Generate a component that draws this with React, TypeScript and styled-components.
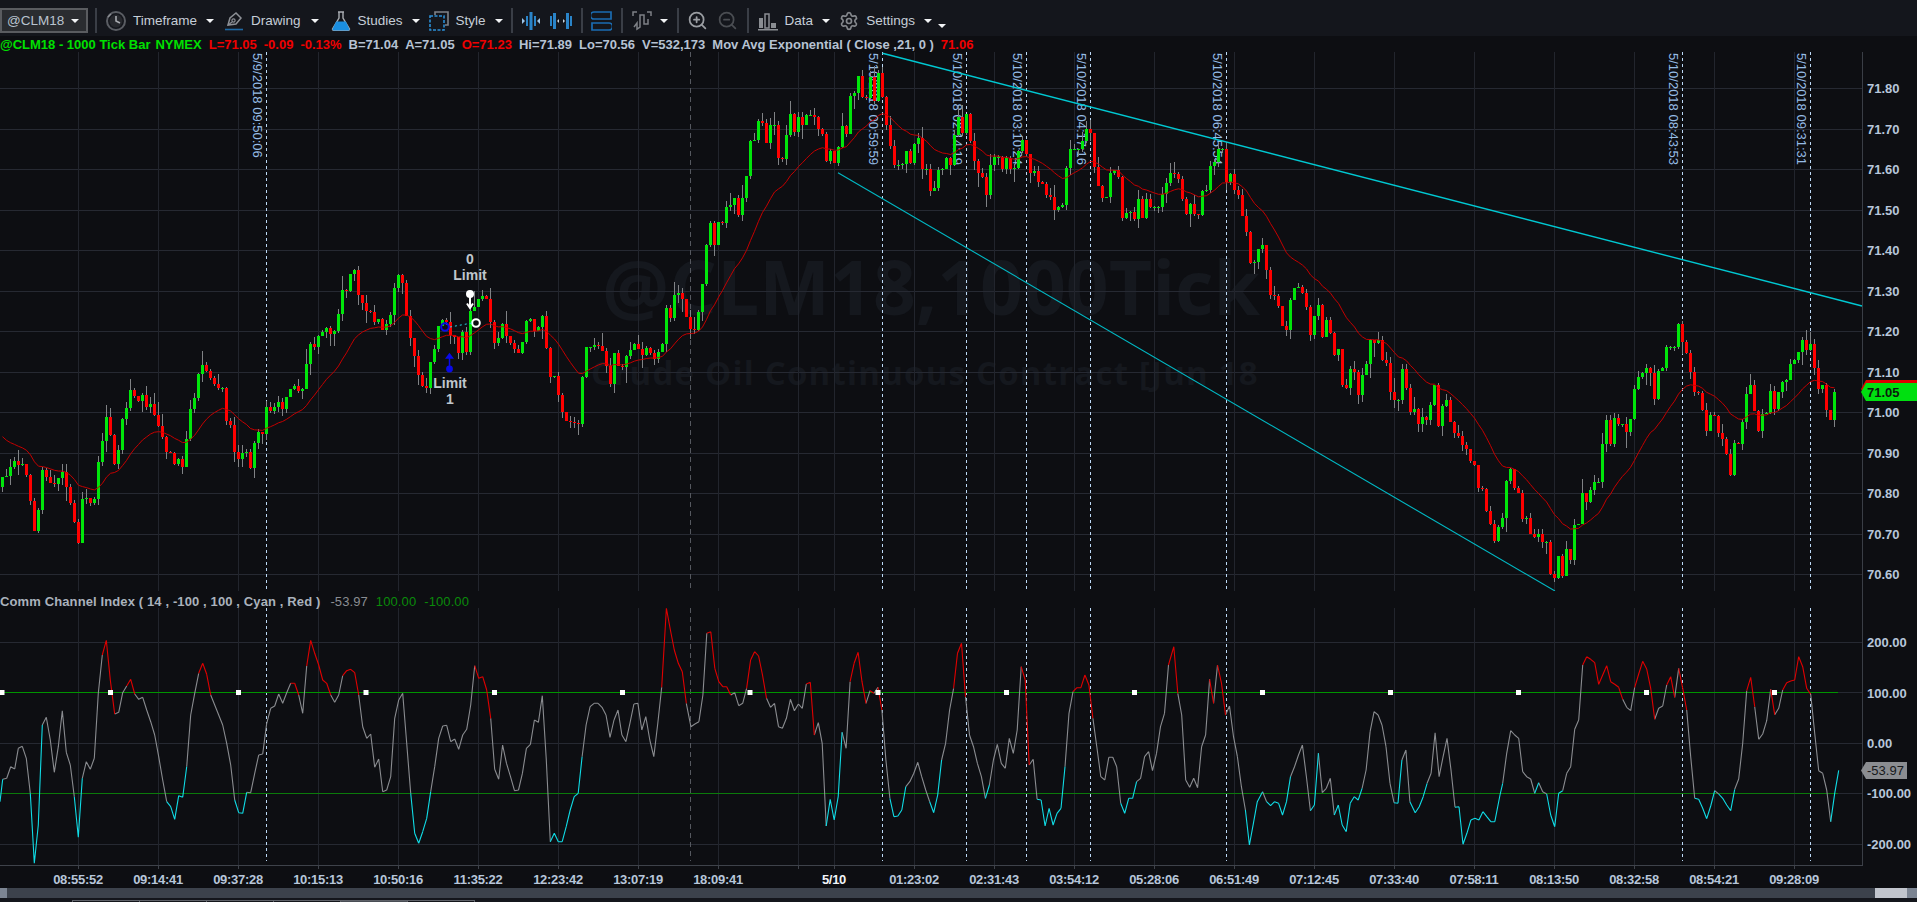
import React from 'react';
import styled, { createGlobalStyle } from 'styled-components';
import { Settings, ZoomIn, ZoomOut } from 'lucide-react';

const GlobalStyle = createGlobalStyle`
  html, body {
    margin: 0;
    padding: 0;
    background: #14161c;
    overflow: hidden;
  }
  body {
    font-family: "Liberation Sans", Arial, sans-serif;
  }
`;

/* ---------- data ---------- */

type Pt = [number, number];

// traces are read off the chart in crop units, then mapped back to page pixels
const parseTrace = (s: string, ox: number, oy: number, kx: number, ky = 3): Pt[] =>
  s.trim().split(/\s+/).map((p) => {
    const [x, y] = p.split(',').map(Number);
    return [ox + x / kx, oy + y / ky] as Pt;
  });

const closeTrace: Pt[] = [
  ...parseTrace(`0,705 12,715 24,680 34,660 45,680 55,665 68,780 78,880 88,795 96,680 108,725 120,735 130,715 140,695 150,745 165,830 175,920 185,775 195,775 205,795 215,770 222,640 232,590 240,518 248,590 258,688 266,625 275,530 285,500 295,432 305,490 312,480 322,458 330,515 338,490 350,540 362,580 372,637 382,640 392,675 402,652 412,695 418,592 428,495 438,468 445,397 455,370 465,400 480,430 490,445 500,445 508,550 518,555 528,665 535,655 550,625 562,688 572,590 582,570 592,590 598,482 608,520 622,480 636,515 642,470 652,445 662,435 675,470 688,360 696,310 705,323 714,285 722,275 733,263 745,295 758,225 768,142 778,155 785,103 795,90 803,165 813,190 822,215 832,215 840,250 848,237 858,275 866,250 875,225 884,140 892,102 902,130 910,225 920,298 930,358 938,410 948,445 958,445 965,358 975,322 983,250 993,238 1000,245 1010,290 1018,290 1028,345 1036,275 1045,335 1053,215 1062,202 1072,178 1082,168 1090,178 1098,240 1108,310 1118,290 1125,250 1138,300 1152,325 1165,345 1172,295 1180,238 1190,238 1200,285 1215,226 1224,322 1234,420 1242,408 1252,470 1260,517 1270,545 1285,545 1295,565 1305,408 1313,322 1325,322 1335,310 1350,335 1358,375 1368,435 1378,322 1390,410 1398,360 1410,335 1420,310 1440,345 1450,320 1465,358 1475,335 1485,310 1493,202 1503,238 1510,165 1525,155`, 0, 240, 2.24),
  ...parseTrace(`15,795 27,840 37,840 47,785 57,700 68,575 78,515 88,590 97,515 107,520 118,470 128,465 138,445 148,495 158,445 168,380 178,273 188,273 198,213 208,213 218,285 228,225 240,225 250,335 258,335 270,250 280,190 290,250 300,200 310,225 322,190 340,200 350,238 360,250 370,335 380,300 392,345 400,298 410,225 420,265 430,138 440,138 450,67 460,140 470,155 482,80 492,155 500,55 512,140 522,225 532,285 542,345 552,345 562,345 572,298 582,345 592,285 603,262 613,358 625,358 633,422 642,422 654,358 664,358 673,322 684,345 693,262 704,200 713,262 723,178 733,262 745,335 755,370 765,382 775,435 785,345 795,320 803,310 815,358 825,322 835,358 845,358 855,310 864,262 876,310 885,370 895,358 905,395 915,395 925,435 935,435 947,480 957,470 967,470 977,358 987,298 997,298 1007,298 1017,275 1027,238 1037,238 1047,345 1058,405 1068,445 1078,445 1088,370 1098,358 1110,382 1118,505 1128,490 1138,480 1148,515 1160,445 1170,505 1180,445 1190,470 1200,470 1210,470 1220,432 1240,370 1250,370 1260,382 1270,445 1282,495 1292,458 1302,495 1312,495 1322,420 1332,420 1342,345 1352,335 1362,298 1372,298 1382,395 1392,370 1402,420 1412,432 1422,495 1432,540 1442,638 1452,638 1462,600 1472,577 1482,650 1492,735 1502,735 1514,770 1526,840 1536,840 1545,738 1555,712 1566,712`, 680, 50, 2.529),
  ...parseTrace(`205,225 212,262 222,348 232,285 240,238 250,358 260,298 270,335 280,405 290,382 300,495 310,505 320,445 330,458 340,530 350,458 360,430 368,358 380,372 388,358 398,420 408,430 418,518 428,542 438,540 447,445 457,505 467,578 477,565 487,615 497,590 507,602 516,552 526,492 536,628 546,552 556,540 564,602 574,638 584,648 594,675 604,688 614,725 624,737 634,808 644,808 654,880 664,917 673,965 683,917 693,893 702,783 712,747 722,808 732,820 742,905 752,893 760,940 772,953 780,940 790,965 800,965 810,1065 820,1075 830,1002 840,1075 850,978 858,1028 868,915 878,915 888,820 898,845 908,808 918,785 928,785 938,660 947,600 957,675 967,590 977,615 987,612 997,638 1007,590 1017,492 1027,468 1037,458 1045,445 1055,458 1065,542 1075,445 1085,445 1095,372 1105,382 1115,382 1125,298 1135,382 1145,405 1155,470 1165,530 1175,517 1183,578 1193,638 1203,578 1213,590 1223,650 1233,660 1243,712 1252,772 1262,650 1272,675 1282,590 1292,505 1302,492 1310,578 1320,638 1330,578 1340,578 1350,505 1360,578 1370,505 1380,480 1390,480 1398,430 1408,418 1418,393 1428,358 1438,395 1448,370 1458,458 1468,517 1477,492 1487,578 1497,602 1505,517`, 1220, 220, 2.45),
];

const cciTrace: Pt[] = [
  ...parseTrace(`0,665 8,598 20,595 32,560 44,567 55,505 67,499 79,535 91,640 103,850 115,735 127,435 139,412 151,480 163,577 175,500 187,392 199,517 211,555 223,650 235,772 247,595 259,545 271,568 283,535 295,340 307,225 319,181 331,300 344,402 356,397 368,338 380,318 392,298 404,342 416,358 428,352 440,390 452,425 464,465 476,530 488,600 500,665 512,680 524,718 536,647 548,652 560,560 572,405 584,340 596,280 608,250 620,283 632,345 644,375 656,405 668,435 680,490 692,555 704,660 716,698 728,700 740,637 752,638 764,580 776,525 788,522 800,430 812,385 824,378 836,342 848,370 860,338 872,310 884,310 896,345 908,400 920,258 932,181 944,220 956,255 968,300 980,310 992,345 1004,367 1016,345 1028,287 1040,272 1052,268 1064,278 1076,345 1088,440 1100,475 1112,462 1124,562 1136,537 1148,635 1160,630 1172,590 1184,415 1196,360 1208,340 1220,490 1232,640 1244,760 1256,790 1268,755 1280,715 1292,635 1304,560 1316,475 1328,438 1340,436 1352,485 1364,477 1376,508 1388,465 1400,448 1412,375 1424,257 1436,295 1448,290 1460,330 1472,415 1484,568 1496,598`, 0, 580, 3),
  ...parseTrace(`34,435 40,490 46,530 52,572 58,570 64,520 70,445 76,433 82,360 88,367 94,287 100,480 106,725 112,700 118,725 124,725 130,680 136,630 142,590 148,580 154,470 160,375 166,320 172,310 178,310 184,322 190,345 196,412 202,360 208,330 214,405 220,425 226,370 232,312 238,310 244,390 250,350 256,420 262,470 268,370 274,262 281,25 287,90 293,150 299,190 305,215 311,310 318,380 324,372 330,365 336,285 342,100 348,95 354,205 360,245 366,260 372,260 378,285 384,278 390,317 396,310 402,265 408,180 414,155 420,168 426,225 432,295 438,322 444,310 450,380 456,385 462,355 468,298 474,332 480,312 486,325 492,252 498,247 504,405 510,368 516,430 522,678 528,598 534,660 540,590 546,397 552,445 558,245 564,190 570,157 576,245 582,310 588,272 594,280 600,262 606,330 612,480 618,595 624,650 630,648 636,630 642,560 648,545 654,520 660,487 666,530 672,570 678,605 684,638 690,585 696,480 702,430 708,330 714,265 720,160 726,130 732,290 738,405 744,440 750,490 756,530 762,595 768,555 774,480 780,433 786,490 792,505 798,415 804,460 810,390 816,200 822,240 828,495 834,478 840,598 846,600 852,678 858,625 864,675 870,640 876,625 882,500 888,340 894,275 900,263 906,263 912,225 918,255 924,355 930,440 936,530 942,540 948,472 954,472 960,500 966,610 972,640 978,595 984,595 990,545 996,535 1002,470 1008,455 1014,512 1020,460 1026,380 1032,340 1038,195 1046,140 1052,280 1058,345 1064,540 1070,562 1076,535 1082,563 1088,440 1094,405 1100,238 1106,310 1112,195 1118,250 1124,345 1130,318 1136,410 1142,470 1148,560 1154,630 1160,735 1166,670 1172,605 1180,575 1186,605 1192,617 1198,605 1204,610 1210,645 1216,605 1222,530 1228,500 1234,465 1240,435 1246,530 1252,632 1258,615 1264,460 1270,578 1276,565 1282,535 1288,645 1294,615 1300,675 1306,695 1312,610 1318,590 1324,600 1330,565 1336,510 1342,395 1348,335 1354,345 1360,375 1366,440 1372,550 1378,608 1384,610 1390,480 1396,450 1402,605 1410,638 1416,620 1422,590 1428,550 1434,520 1440,398 1446,530 1452,470 1458,415 1464,510 1470,622 1476,620 1482,733 1488,700 1494,660 1500,655 1506,660 1512,635 1518,650 1524,665 1530,665`, 480, 600, 1.5077),
  ...parseTrace(`0,585 8,550 20,460 32,392 44,405 56,415 68,515 80,530 92,537 104,580 116,548 128,575 140,582 152,645 164,680 176,580 188,572 200,520 212,500 224,388 236,360 248,195 260,170 272,178 284,188 296,253 320,197 332,245 344,253 356,262 368,298 380,322 392,332 404,262 416,222 428,184 440,207 452,265 464,358 476,325 488,318 500,255 512,230 524,292 536,205 548,265 560,330 572,470 584,595 596,598 608,625 620,656 632,618 644,572 656,582 668,595 680,615 692,632 704,568 716,537 728,430 740,272 752,232 764,320 776,418 788,402 800,362 812,268 824,344 836,325 848,270 860,248 872,243 884,240 896,170 908,200 920,265 932,283 944,400 956,512 968,520 980,570 992,665 1004,580 1016,511`, 1500, 600, 3),
];

const interp = (pts: Pt[], x: number) => {
  if (x <= pts[0][0]) return pts[0][1];
  for (let i = 1; i < pts.length; i++) {
    if (x <= pts[i][0]) {
      const [x0, y0] = pts[i - 1];
      const [x1, y1] = pts[i];
      return y0 + ((y1 - y0) * (x - x0)) / Math.max(x1 - x0, 0.001);
    }
  }
  return pts[pts.length - 1][1];
};

let seed = 1807;
const rand = () => {
  seed = (seed * 16807) % 2147483647;
  return seed / 2147483647;
};

const BAR_COUNT = 459;
const closes = Array.from({ length: BAR_COUNT }, (_, i) => Math.round(interp(closeTrace, 2.5 + 4 * i)));

let greenBodies = '';
let redBodies = '';
let wicks = '';
closes.forEach((c, i) => {
  const o = i === 0 ? c + 10 : closes[i - 1];
  const x = 1 + 4 * i;
  const top = Math.min(o, c);
  const h = Math.max(Math.abs(o - c), 1);
  const hi = top - Math.round(rand() * rand() * 16);
  const lo = top + h + Math.round(rand() * rand() * 16);
  wicks += `M${x + 1.5} ${hi}V${lo}`;
  const body = `M${x} ${top}h3v${h}h-3z`;
  if (c <= o) greenBodies += body;
  else redBodies += body;
});

let ema = 432.7;
const emaPoints = closes
  .map((c, i) => {
    ema += ((c - ema) * 2) / 22;
    return `${2.5 + 4 * i},${ema.toFixed(1)}`;
  })
  .join(' ');

const LEVEL_100 = 692.5;
const LEVEL_M100 = 793;
let cciGray = '';
let cciRed = '';
let cciCyan = '';
for (let i = 0; i < cciTrace.length - 1; i++) {
  const [x0, y0] = cciTrace[i];
  const [x1, y1] = cciTrace[i + 1];
  const seg = `M${x0.toFixed(1)} ${y0.toFixed(1)}L${x1.toFixed(1)} ${y1.toFixed(1)}`;
  if (y0 < LEVEL_100) cciRed += seg;
  else if (y0 > LEVEL_M100) cciCyan += seg;
  else cciGray += seg;
}

const priceY = (p: number) => 331.2 - (p - 71.2) * 405;
const PRICES = ['71.80', '71.70', '71.60', '71.50', '71.40', '71.30', '71.20', '71.10', '71.00', '70.90', '70.80', '70.70', '70.60'];
const CCI_LEVELS: [string, number][] = [['200.00', 642], ['100.00', 692.5], ['0.00', 743], ['-100.00', 793], ['-200.00', 844]];

const TIME_TICKS: [number, string][] = [
  [78, '08:55:52'], [158, '09:14:41'], [238, '09:37:28'], [318, '10:15:13'], [398, '10:50:16'],
  [478, '11:35:22'], [558, '12:23:42'], [638, '13:07:19'], [718, '18:09:41'], [798, ''],
  [834, '5/10'], [914, '01:23:02'], [994, '02:31:43'], [1074, '03:54:12'], [1154, '05:28:06'],
  [1234, '06:51:49'], [1314, '07:12:45'], [1394, '07:33:40'], [1474, '07:58:11'], [1554, '08:13:50'],
  [1634, '08:32:58'], [1714, '08:54:21'], [1794, '09:28:09'],
];

const DATE_MARKS: [number, string][] = [
  [266, '5/9/2018 09:50:06'], [882, '5/10/2018 00:59:59'], [966, '5/10/2018 02:14:19'],
  [1026, '5/10/2018 03:10:24'], [1090, '5/10/2018 04:17:16'], [1226, '5/10/2018 06:45:54'],
  [1682, '5/10/2018 08:43:53'], [1810, '5/10/2018 09:31:31'],
];

const SQUARES = [2, 110.5, 238.5, 366, 494.5, 622.5, 750, 878, 1006.5, 1134.5, 1262.5, 1390.5, 1518.5, 1646.5, 1774.5];

/* ---------- layout ---------- */

const Page = styled.div`
  width: 1917px;
  height: 902px;
  display: flex;
  flex-direction: column;
  overflow: hidden;
  background: #0d0e12;
`;

const Toolbar = styled.div`
  height: 36px;
  flex: none;
  box-sizing: border-box;
  padding-top: 5px;
  display: flex;
  align-items: center;
  background: #14161c;
  color: #c6ced8;
  font-size: 13.5px;
`;

const SymbolBox = styled.div`
  width: 88px;
  height: 25px;
  box-sizing: border-box;
  display: flex;
  align-items: center;
  justify-content: space-between;
  padding: 0 7px 0 5px;
  border: 2px solid #5a5c60;
  background: #2a2c30;
  color: #b9c3cf;
`;

const Separator = styled.span<{ $left: number; $right: number }>`
  width: 2px;
  height: 25px;
  flex: none;
  margin: 0 ${(p) => p.$right}px 0 ${(p) => p.$left}px;
  background: #3a3e46;
`;

const ToolButton = styled.div<{ $after?: number; $icon?: number }>`
  display: flex;
  align-items: center;
  margin-right: ${(p) => p.$after ?? 12}px;
  gap: ${(p) => p.$icon ?? 7}px;
`;

const Caret = styled.i<{ $low?: boolean }>`
  display: block;
  width: 0;
  height: 0;
  margin-left: 1px;
  margin-top: ${(p) => (p.$low ? 10 : 0)}px;
  border-left: 4px solid transparent;
  border-right: 4px solid transparent;
  border-top: 4px solid #f2f4f6;
`;

const Label = styled.span`
  line-height: 16px;
  margin-right: 1px;
`;

const QuoteRow = styled.div`
  height: 16px;
  flex: none;
  display: flex;
  align-items: center;
  gap: 7px;
  font-size: 13px;
  font-weight: 700;
  white-space: nowrap;
  color: #b6c2d2;
  background: #0d0e12;
`;

const Quote = styled.span<{ $color?: string; $tight?: boolean }>`
  color: ${(p) => p.$color ?? 'inherit'};
  margin-right: ${(p) => (p.$tight ? -2 : 0)}px;
`;

const Plot = styled.svg`
  display: block;
  flex: none;
  width: 1917px;
`;

const PaneTitle = styled.div`
  position: relative;
  height: 17px;
  flex: none;
  display: flex;
  align-items: center;
  gap: 8px;
  padding-top: 3px;
  box-sizing: border-box;
  font-size: 13px;
  font-weight: 700;
  color: #aab2bc;
  white-space: nowrap;
  &::after {
    content: '';
    position: absolute;
    left: 1862px;
    top: 0;
    bottom: 0;
    width: 1px;
    background: #3a3e46;
  }
`;

const TitleName = styled.span`
  letter-spacing: 0.12px;
  margin-right: 2px;
`;

const TitleValue = styled.span<{ $color: string }>`
  font-weight: 400;
  letter-spacing: 0.1px;
  color: ${(p) => p.$color};
`;

const ScrollBar = styled.div`
  height: 10px;
  flex: none;
  display: flex;
  background: #3c424c;
`;

const ScrollEnd = styled.div<{ $w: number }>`
  width: ${(p) => p.$w}px;
  background: #7c8593;
`;

const ScrollThumb = styled.div`
  width: 32px;
  margin-left: auto;
  background: #c1c5cd;
`;

const TabStrip = styled.div`
  height: 4px;
  flex: none;
  display: flex;
  padding-left: 72px;
  padding-top: 2px;
  box-sizing: border-box;
  background: #14161c;
`;

const Tab = styled.div<{ $active?: boolean }>`
  width: 68px;
  box-sizing: border-box;
  border: 1px solid #5e6168;
  border-bottom: none;
  margin-right: -1px;
  background: ${(p) => (p.$active ? '#4a4e56' : 'transparent')};
`;

const AxisText = styled.text<{ $color?: string }>`
  font: 700 13px "Liberation Sans", Arial, sans-serif;
  fill: ${(p) => p.$color ?? '#b7c6da'};
`;

const DateText = styled.text`
  font: 400 13px "Liberation Sans", Arial, sans-serif;
  fill: #97bde6;
`;

const OrderText = styled.text`
  font: 700 14px "Liberation Sans", Arial, sans-serif;
  fill: #c0c6cc;
  text-anchor: middle;
`;

const Watermark = styled.text<{ $size: number }>`
  font: 700 ${(p) => p.$size}px "Open Sans", "Liberation Sans", sans-serif;
  fill: #15181e;
  text-anchor: middle;
`;

/* ---------- toolbar icons ---------- */

const ClockIcon = () => (
  <svg width="20" height="20" viewBox="0 0 20 20" fill="none">
    <circle cx="10" cy="10" r="9" stroke="#5a5d63" strokeWidth="2" />
    <circle cx="10" cy="10" r="6.5" fill="#26282d" />
    <path d="M10 5v5l4 2" stroke="#a8abb0" strokeWidth="1.6" />
    <path d="M2 6l3-3" stroke="#8a8d92" strokeWidth="1.4" />
  </svg>
);

const DrawingIcon = () => (
  <svg width="18" height="20" viewBox="0 0 18 20" fill="none">
    <path d="M3 14 L5 7 L11 2 L16 7 L11 13 Z" stroke="#8d9096" strokeWidth="1.5" />
    <circle cx="8.5" cy="9.5" r="1.6" stroke="#8d9096" strokeWidth="1.2" />
    <path d="M3 14l4-3" stroke="#8d9096" strokeWidth="1.1" />
    <path d="M0 18.5h18" stroke="#1e6aa6" strokeWidth="1.6" />
  </svg>
);

const FlaskIcon = () => (
  <svg width="20" height="20" viewBox="0 0 20 20" fill="none">
    <path d="M7 1h6M8 1.5v5.5L1.5 18a1 1 0 0 0 1 1.2h15a1 1 0 0 0 1-1.2L12 7V1.5" stroke="#a9adb2" strokeWidth="1.4" />
    <path d="M5.2 10.5h9.6l3.6 7.6a1 1 0 0 1-1 1.4H2.6a1 1 0 0 1-1-1.4z" fill="#1a8ee0" />
  </svg>
);

const StyleIcon = () => (
  <svg width="20" height="20" viewBox="0 0 20 20" fill="none">
    <path d="M6 4V1h13v13h-3" stroke="#7f8389" strokeWidth="1.6" />
    <rect x="1" y="5" width="14" height="14" stroke="#2b8fd6" strokeWidth="1.6" strokeDasharray="3 1.5" />
  </svg>
);

const SqueezeIcon = () => (
  <svg width="20" height="20" viewBox="0 0 20 20">
    <path d="M1 7l3 3-3 3z" fill="#9cc4e6" />
    <rect x="5" y="5" width="2" height="10" fill="#2a84c8" />
    <rect x="8.5" y="1" width="3" height="18" fill="#2a84c8" />
    <rect x="13" y="5" width="2" height="10" fill="#2a84c8" />
    <path d="M19 7l-3 3 3 3z" fill="#9cc4e6" />
  </svg>
);

const StretchIcon = () => (
  <svg width="22" height="20" viewBox="0 0 22 20">
    <rect x="0" y="5" width="2" height="10" fill="#2a84c8" />
    <rect x="3" y="2" width="3" height="16" fill="#2a84c8" />
    <path d="M9 8l-2 2 2 2zM13 8l2 2-2 2z" fill="#c8d4de" />
    <rect x="16" y="2" width="3" height="16" fill="#2a84c8" />
    <rect x="20" y="5" width="2" height="10" fill="#2a84c8" />
  </svg>
);

const PanelsIcon = () => (
  <svg width="21" height="20" viewBox="0 0 21 20" fill="none" stroke="#1a6cb2" strokeWidth="1.7">
    <path d="M3 1h17v7H3a3.5 3.5 0 0 1 0-7z" />
    <path d="M1 12h17a3.5 3.5 0 0 1 0 7H1z" />
  </svg>
);

const CropIcon = () => (
  <svg width="20" height="20" viewBox="0 0 20 20" fill="none" stroke="#7d8085" strokeWidth="1.5">
    <path d="M1 5V1h4M15 1h4v4" />
    <path d="M2 16l3-4v6l3-2V4h4v9h4V8" />
  </svg>
);

const BarsIcon = () => (
  <svg width="20" height="20" viewBox="0 0 20 20" fill="#8a8d92">
    <rect x="1" y="7" width="4" height="10" />
    <rect x="7" y="3" width="4" height="14" fill="none" stroke="#8a8d92" strokeWidth="1.5" />
    <rect x="13" y="12" width="5" height="5" />
    <rect x="0" y="18" width="20" height="1.5" />
  </svg>
);

/* ---------- chart panes ---------- */

const GridVerticals = ({ y0, y1 }: { y0: number; y1: number }) => (
  <path
    d={TIME_TICKS.map(([x]) => `M${x + 0.5} ${y0}V${y1}`).join('')}
    stroke="#22252d"
    strokeWidth="1"
    shapeRendering="crispEdges"
  />
);

const Marks = ({ y0, y1 }: { y0: number; y1: number }) => (
  <>
    <path d={`M690.5 ${y0}V${y1}`} stroke="#55585f" strokeDasharray="5 4" shapeRendering="crispEdges" />
    <path
      d={DATE_MARKS.map(([x]) => `M${x + 0.5} ${y0}V${y1}`).join('')}
      stroke="#bcd9f6"
      strokeDasharray="3 3"
      shapeRendering="crispEdges"
    />
  </>
);

const PricePane = () => (
  <Plot viewBox="0 52 1917 539" height="539">
    <Watermark $size={75} x="931" y="315">@CLM18,1000Tick</Watermark>
    <Watermark $size={33} x="925" y="385" style={{ letterSpacing: 1.2 }}>Crude Oil Continuous Contract [Jun 18</Watermark>
    <path
      d={PRICES.map((p) => `M0 ${Math.round(priceY(Number(p))) + 0.5}H1862`).join('')}
      stroke="#262932"
      shapeRendering="crispEdges"
    />
    <GridVerticals y0={52} y1={591} />
    <Marks y0={52} y1={591} />
    {DATE_MARKS.map(([x, t]) => (
      <DateText key={x} transform={`translate(${x - 13},53) rotate(90)`}>{t}</DateText>
    ))}
    <path d={wicks} stroke="#808285" shapeRendering="crispEdges" />
    <path d={greenBodies} fill="#00e60a" shapeRendering="crispEdges" />
    <path d={redBodies} fill="#ff0000" shapeRendering="crispEdges" />
    <polyline points={emaPoints} fill="none" stroke="#c40000" strokeWidth="1" />
    <path d="M882.5 53.3L1862 306" stroke="#00c8d2" strokeWidth="1.4" />
    <path d="M838 172.7L1555 591" stroke="#00b8c4" strokeWidth="1.1" />

    {/* working orders */}
    <OrderText x="470" y="264">0</OrderText>
    <OrderText x="470" y="280">Limit</OrderText>
    <circle cx="470" cy="294" r="4" fill="#fff" />
    <path d="M470 296v11M467 303.5l3 4.5 3-4.5" stroke="#fff" strokeWidth="2" fill="none" />
    <circle cx="476" cy="323" r="3.8" fill="#0d0e12" stroke="#fff" strokeWidth="2" />
    <path d="M450 327L472 323" stroke="#22d8e8" strokeDasharray="2 3" />
    <circle cx="445" cy="327" r="3.8" fill="none" stroke="#0a0ae8" strokeWidth="2" />
    <path d="M449.5 357v10M446.5 358l3-4 3 4z" stroke="#0a0ae8" strokeWidth="1.5" fill="#0a0ae8" />
    <circle cx="449.5" cy="369" r="3.4" fill="#0a0ae8" />
    <OrderText x="450" y="388">Limit</OrderText>
    <OrderText x="450" y="404">1</OrderText>

    {/* price axis */}
    <path d="M1862.5 52V591" stroke="#3a3e46" shapeRendering="crispEdges" />
    {PRICES.map((p) => (
      <AxisText key={p} x="1867" y={priceY(Number(p)) + 5}>{p}</AxisText>
    ))}
    <polygon points="1861,389 1866,380 1917,380 1917,398 1866,398" fill="#e00000" />
    <polygon points="1861,392 1866,383 1917,383 1917,401 1866,401" fill="#00e010" />
    <AxisText x="1867" y="397" $color="#0c1a0c">71.05</AxisText>
  </Plot>
);

const CciPane = () => (
  <Plot viewBox="0 608 1917 257" height="257">
    <path
      d={CCI_LEVELS.map(([, y]) => `M0 ${Math.floor(y) + 0.5}H1862`).join('')}
      stroke="#262932"
      shapeRendering="crispEdges"
    />
    <GridVerticals y0={608} y1={865} />
    <Marks y0={608} y1={861} />
    <path d="M0 692.5H1838" stroke="#009400" shapeRendering="crispEdges" />
    <path d="M0 793.5H1838" stroke="#0b7a0b" shapeRendering="crispEdges" />
    <path d={cciGray} fill="none" stroke="#8a8c90" strokeWidth="1.1" />
    <path d={cciRed} fill="none" stroke="#e00000" strokeWidth="1.1" />
    <path d={cciCyan} fill="none" stroke="#10dce6" strokeWidth="1.1" />
    {SQUARES.map((x) => (
      <rect key={x} x={x - 2.5} y="690" width="5" height="5" fill="#fff" />
    ))}
    <path d="M1862.5 608V865" stroke="#3a3e46" shapeRendering="crispEdges" />
    {CCI_LEVELS.map(([label, y]) => (
      <AxisText key={label} x="1867" y={y + 5}>{label}</AxisText>
    ))}
    <polygon points="1861,770.5 1866,762 1907,762 1907,779 1866,779" fill="#8b8d91" />
    <AxisText x="1867" y="775" $color="#17191c" style={{ fontWeight: 400 }}>-53.97</AxisText>
  </Plot>
);

const TimeAxis = () => (
  <Plot viewBox="0 865 1917 23" height="23">
    <path d="M0 865.5H1863" stroke="#3e424a" shapeRendering="crispEdges" />
    <path d={TIME_TICKS.map(([x]) => `M${x + 0.5} 865V869`).join('')} stroke="#3e424a" shapeRendering="crispEdges" />
    {TIME_TICKS.map(([x, t]) => (
      <AxisText
        key={x}
        x={x}
        y="884"
        textAnchor="middle"
        letterSpacing="-0.3"
        $color={t === '5/10' ? '#f2f4f8' : undefined}
      >
        {t}
      </AxisText>
    ))}
  </Plot>
);

export default function App() {
  return (
    <Page>
      <GlobalStyle />
      <Toolbar>
        <SymbolBox>@CLM18<Caret /></SymbolBox>
        <Separator $left={7} $right={9} />
        <ToolButton $after={11}><ClockIcon /><Label>Timeframe</Label><Caret /></ToolButton>
        <ToolButton $icon={8}><DrawingIcon /><Label>Drawing</Label><Caret /></ToolButton>
        <ToolButton $after={9}><FlaskIcon /><Label>Studies</Label><Caret /></ToolButton>
        <ToolButton $after={0}><StyleIcon /><Label>Style</Label><Caret /></ToolButton>
        <Separator $left={8} $right={8} />
        <ToolButton $after={9}><SqueezeIcon /></ToolButton>
        <ToolButton $after={0}><StretchIcon /></ToolButton>
        <Separator $left={9} $right={8} />
        <ToolButton $after={0}><PanelsIcon /></ToolButton>
        <Separator $left={9} $right={9} />
        <ToolButton $after={0}><CropIcon /><Caret /></ToolButton>
        <Separator $left={9} $right={8} />
        <ToolButton $after={9}><ZoomIn size={21} color="#9a9da2" strokeWidth={2} /></ToolButton>
        <ToolButton $after={0}><ZoomOut size={21} color="#4a4d52" strokeWidth={2} /></ToolButton>
        <Separator $left={9} $right={9} />
        <ToolButton $after={9}><BarsIcon /><Label>Data</Label><Caret /></ToolButton>
        <ToolButton $after={5}><Settings size={20} color="#85888d" strokeWidth={2} /><Label>Settings</Label><Caret /></ToolButton>
        <Caret $low />
      </Toolbar>

      <QuoteRow>
        <Quote $color="#00e000" $tight>@CLM18 - 1000 Tick Bar</Quote>
        <Quote $color="#00e000">NYMEX</Quote>
        <Quote $color="#f00000">L=71.05</Quote>
        <Quote $color="#f00000">-0.09</Quote>
        <Quote $color="#f00000">-0.13%</Quote>
        <Quote>B=71.04</Quote>
        <Quote>A=71.05</Quote>
        <Quote $color="#f00000">O=71.23</Quote>
        <Quote>Hi=71.89</Quote>
        <Quote>Lo=70.56</Quote>
        <Quote>V=532,173</Quote>
        <Quote>Mov Avg Exponential ( Close ,21, 0 )</Quote>
        <Quote $color="#f00000">71.06</Quote>
      </QuoteRow>

      <PricePane />

      <PaneTitle>
        <TitleName>Comm Channel Index ( 14 , -100 , 100 , Cyan , Red )</TitleName>
        <TitleValue $color="#8a8d92">-53.97</TitleValue>
        <TitleValue $color="#0a8a0a">100.00</TitleValue>
        <TitleValue $color="#0a8a0a">-100.00</TitleValue>
      </PaneTitle>

      <CciPane />
      <TimeAxis />

      <ScrollBar>
        <ScrollEnd $w={7} />
        <ScrollThumb />
        <ScrollEnd $w={10} />
      </ScrollBar>
      <TabStrip>
        <Tab /><Tab /><Tab /><Tab /><Tab $active /><Tab />
      </TabStrip>
    </Page>
  );
}
